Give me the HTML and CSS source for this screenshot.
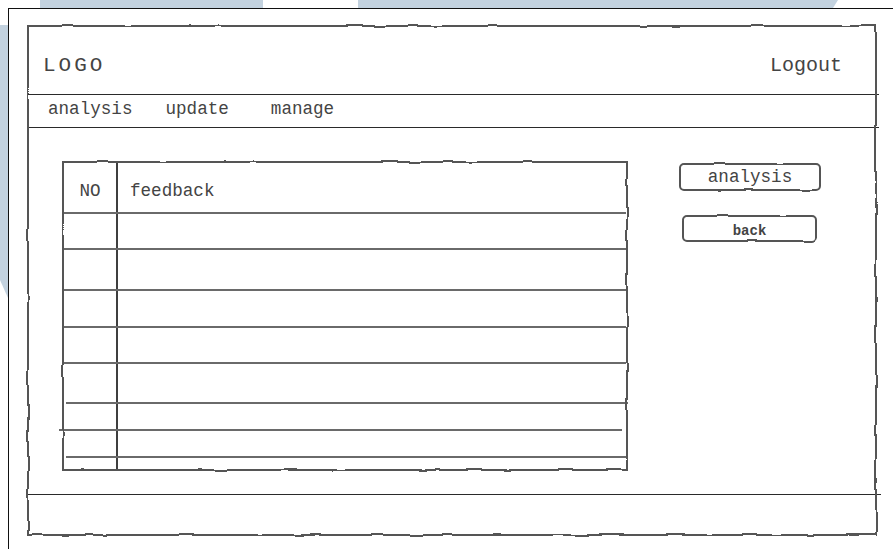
FILE: index.html
```html
<!DOCTYPE html>
<html lang="en">
<head>
<meta charset="utf-8">
<title>Feedback – analysis</title>
<link rel="stylesheet" href="styles.css">
</head>
<body>
  <svg class="backdrop" width="893" height="549" viewBox="0 0 893 549" aria-hidden="true">
    <defs>
      <!-- hand-drawn wobble for sketch outlines -->
      <filter id="rough" x="-5%" y="-5%" width="110%" height="110%">
        <feTurbulence type="fractalNoise" baseFrequency="0.035" numOctaves="2" seed="7" result="noise" />
        <feDisplacementMap in="SourceGraphic" in2="noise" scale="3.5" xChannelSelector="R" yChannelSelector="G" />
      </filter>
    </defs>
    <polygon points="40,0 263,0 263,8 40,8" />
    <polygon points="358,0 838,0 833,8 358,8" />
    <polygon points="0,25 8,25 8,298 0,280" />
  </svg>

  <div class="sheet">
    <div class="frame">
      <header class="topbar">
        <span class="logo">LOGO</span>
        <a class="logout">Logout</a>
      </header>

      <nav class="menu">
        <a class="menu-item">analysis</a>
        <a class="menu-item item-update">update</a>
        <a class="menu-item item-manage">manage</a>
      </nav>

      <main class="content">
        <div class="table">
          <div class="row row-head">
            <div class="cell cell-no">NO</div>
            <div class="cell cell-text">feedback</div>
          </div>
          <div class="row row-2"><div class="cell cell-no"></div><div class="cell cell-text"></div></div>
          <div class="row row-3"><div class="cell cell-no"></div><div class="cell cell-text"></div></div>
          <div class="row row-4"><div class="cell cell-no"></div><div class="cell cell-text"></div></div>
          <div class="row row-5"><div class="cell cell-no"></div><div class="cell cell-text"></div></div>
          <div class="row row-6"><div class="cell cell-no"></div><div class="cell cell-text"></div></div>
          <div class="row row-7"><div class="cell cell-no"></div><div class="cell cell-text"></div></div>
          <div class="row row-8"><div class="cell cell-no"></div><div class="cell cell-text"></div></div>
          <div class="row row-9"><div class="cell cell-no"></div><div class="cell cell-text"></div></div>
        </div>

        <div class="actions">
          <button class="btn btn-analysis">analysis</button>
          <button class="btn btn-back">back</button>
        </div>
      </main>

      <footer class="bottombar"></footer>
    </div>
  </div>
</body>
</html>
```

FILE: styles.css
```css
html, body {
  margin: 0;
  padding: 0;
  width: 893px;
  height: 549px;
  overflow: hidden;
  background: #ffffff;
  font-family: "Liberation Mono", "Courier New", monospace;
  color: #444444;
}

/* light blue shapes peeking out behind the sheet */
.backdrop {
  position: absolute;
  left: 0;
  top: 0;
  z-index: 0;
}
.backdrop polygon {
  fill: #c3d2df;
}

/* white sheet with a thin black edge */
.sheet {
  position: relative;
  z-index: 1;
  margin: 8px 0 0 8px;
  width: 885px;
  height: 541px;
  box-sizing: border-box;
  background: #ffffff;
  border-top: 1px solid #111111;
  border-left: 1px solid #111111;
  padding: 16px 0 0 18px;
}

/* sketched page frame; the outline is drawn by ::before so it can wobble */
.frame {
  position: relative;
  width: 850px;
  height: 511px;
  box-sizing: border-box;
  padding: 2px;
  display: flex;
  flex-direction: column;
}

.frame::before,
.table::before,
.btn::before {
  content: "";
  position: absolute;
  inset: 0;
  border: 2px solid #555555;
  filter: url(#rough);
  pointer-events: none;
}

.topbar {
  height: 68px;
  box-sizing: border-box;
  border-bottom: 1px solid #2a2a2a;
  margin: 0 -4px 0 -2px;
  display: flex;
  align-items: center;
  justify-content: space-between;
  padding: 9px 37px 0 16px;
}

.logo {
  font-size: 21px;
  letter-spacing: 3px;
}

.logout {
  font-size: 20px;
}

.menu {
  height: 33px;
  box-sizing: border-box;
  border-bottom: 1px solid #2a2a2a;
  margin: 0 -4px 0 -2px;
  display: flex;
  align-items: center;
  padding: 0 0 4px 21px;
  font-size: 17.6px;
}

.item-update {
  margin-left: 33px;
}
.item-manage {
  margin-left: 42px;
}

.content {
  height: 367px;
  box-sizing: border-box;
  border-bottom: 1px solid #2a2a2a;
  margin: 0 -6px 0 -2px;
  display: flex;
  align-items: flex-start;
  padding: 33px 0 0 35px;
}

/* feedback table */
.table {
  position: relative;
  width: 566px;
  height: 310px;
  box-sizing: border-box;
  padding: 2px;
  display: flex;
  flex-direction: column;
}

.row {
  display: flex;
  box-sizing: border-box;
  border-top: 2px solid #6a6a6a;
}
.row-head { height: 49px; border-top: none; }
.row-2 { height: 36px; }
.row-3 { height: 41px; }
.row-4 { height: 37px; }
.row-5 { height: 36px; }
.row-6 { height: 40px; }
.row-7 { height: 27px; }
.row-8 { height: 27px; }
.row-9 { height: 13px; }

/* the hand-drawn rules don't all meet the outline exactly */
.row-7,
.row-9 {
  margin: 0 -2px 0 2px;
}
.row-8 {
  margin: 0 4px 0 -5px;
}

.cell {
  font-size: 17.6px;
}
.cell-no {
  width: 52px;
  flex: none;
  text-align: center;
}
.row-7 .cell-no,
.row-9 .cell-no {
  width: 50px;
}
.row-8 .cell-no {
  width: 57px;
}
.cell-text {
  flex: 1;
  border-left: 2px solid #3f3f3f;
  padding-left: 12px;
}
.row-head .cell {
  padding-top: 18px;
}

/* side buttons */
.actions {
  margin: 2px 0 0 51px;
  display: flex;
  flex-direction: column;
  align-items: flex-start;
  gap: 24px;
}

.btn {
  position: relative;
  box-sizing: border-box;
  margin: 0;
  padding: 0;
  background: #ffffff;
  border: none;
  font-family: "Liberation Mono", "Courier New", monospace;
  color: #444444;
  cursor: pointer;
}
.btn::before {
  border-radius: 5px;
}

.btn-analysis {
  width: 142px;
  height: 28px;
  font-size: 17.6px;
  padding-bottom: 1px;
}

.btn-back {
  width: 135px;
  height: 27px;
  margin-left: 3px;
  font-size: 14px;
  font-weight: bold;
  padding-top: 4px;
}

.bottombar {
  flex: 1;
}
```
